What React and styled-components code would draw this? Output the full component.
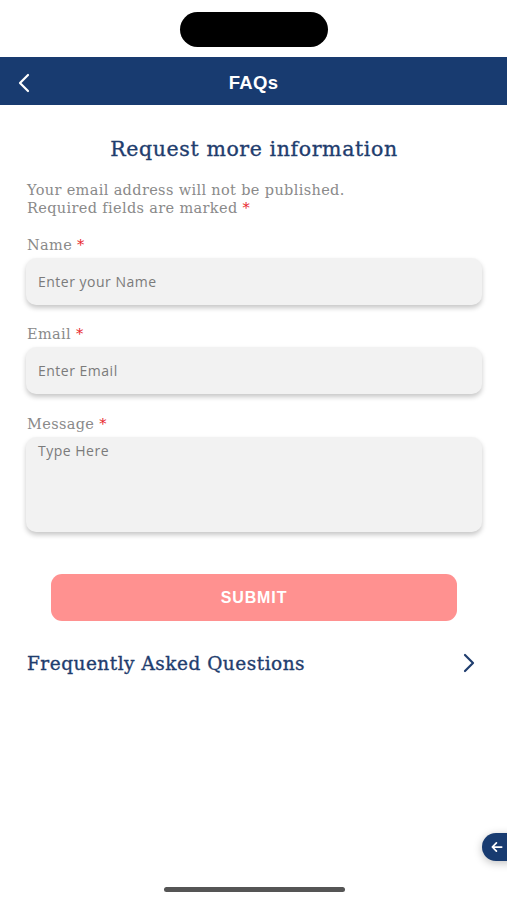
import React from 'react';
import styled, { createGlobalStyle } from 'styled-components';

const Global = createGlobalStyle`
  html, body { margin: 0; padding: 0; background: #fff; }
  #root { min-height: 900px; }
  * { box-sizing: border-box; }
`;

const slab = `"DejaVu Serif", "Liberation Serif", serif`;
const sans = `"Open Sans", Roboto, "Liberation Sans", Arial, sans-serif`;

const Screen = styled.div`
  position: relative;
  width: 507px;
  height: 900px;
  overflow: hidden;
  background: #fff;
  display: flex;
  flex-direction: column;
`;

const StatusBar = styled.div`
  height: 57px;
  display: flex;
  justify-content: center;
  padding-top: 12px;
`;

const Island = styled.div`
  width: 148px;
  height: 35px;
  border-radius: 18px;
  background: #000;
`;

const NavBar = styled.div`
  height: 48px;
  background: #183b70;
  display: flex;
  align-items: center;
  justify-content: center;
  padding-top: 3px;
  position: relative;
`;

const BackBtn = styled.button`
  position: absolute;
  left: 12px;
  top: 14px;
  width: 24px;
  height: 24px;
  padding: 0;
  border: 0;
  background: none;
  display: flex;
  align-items: center;
  justify-content: center;
`;

const NavTitle = styled.h1`
  margin: 0;
  color: #fff;
  font-family: "Liberation Sans", Arial, sans-serif;
  font-weight: bold;
  font-size: 18.5px;
  letter-spacing: 0.3px;
`;

const Content = styled.div`
  padding: 0 25px 0 26px;
  display: flex;
  flex-direction: column;
`;

const Heading = styled.h2`
  margin: 32px 0 0;
  text-align: center;
  font-family: ${slab};
  font-weight: normal;
  font-size: 20.5px;
  letter-spacing: 0.6px;
  color: #1f3d6e;
  -webkit-text-stroke: 0.35px #1f3d6e;
`;

const Note = styled.p`
  margin: 20px 0 0 1px;
  font-family: ${slab};
  font-size: 14.5px;
  letter-spacing: 0.35px;
  line-height: 18px;
  color: #8a8a8a;
`;

const Star = styled.span`
  color: #e8262b;
`;

const Field = styled.div`
  display: flex;
  flex-direction: column;
  margin-top: ${p => p.$top}px;
`;

const Label = styled.label`
  font-family: ${slab};
  font-size: 14.5px;
  letter-spacing: 0.35px;
  color: #8a8a8a;
  margin-left: 1px;
  line-height: 18px;
`;

const Input = styled.input`
  margin-top: 4px;
  height: 47px;
  width: 100%;
  border: 0;
  border-radius: 10px;
  background: #f2f2f2;
  box-shadow: 0 3px 5px rgba(0, 0, 0, 0.22);
  padding: 0 12px;
  font-family: ${sans};
  font-size: 14px;
  color: #333;
  outline: none;
  &::placeholder { color: #7b7b7b; letter-spacing: 0.5px; }
`;

const TextArea = styled.textarea`
  margin-top: 4px;
  height: 95px;
  width: 100%;
  border: 0;
  border-radius: 10px;
  background: #f2f2f2;
  box-shadow: 0 3px 5px rgba(0, 0, 0, 0.22);
  padding: 4px 12px;
  resize: none;
  font-family: ${sans};
  font-size: 14px;
  line-height: 20px;
  outline: none;
  &::placeholder { color: #7b7b7b; letter-spacing: 0.5px; }
`;

const Submit = styled.button`
  margin: 42px 25px 0;
  height: 47px;
  border: 0;
  border-radius: 11px;
  background: #ff9190;
  color: #fff;
  font-family: "Liberation Sans", Arial, sans-serif;
  font-weight: bold;
  font-size: 16px;
  letter-spacing: 0.9px;
`;

const FaqRow = styled.div`
  margin-top: 30px;
  display: flex;
  align-items: center;
  justify-content: space-between;
  padding-right: 1px;
`;

const FaqText = styled.span`
  font-family: ${slab};
  font-size: 18.5px;
  letter-spacing: 0.5px;
  color: #1f3d6e;
  -webkit-text-stroke: 0.35px #1f3d6e;
  margin-left: 1px;
`;

const FloatBtn = styled.button`
  position: absolute;
  left: 482px;
  top: 833px;
  width: 42px;
  height: 28px;
  border-radius: 14px;
  border: 0;
  padding: 0 0 0 8px;
  background: #183b70;
  box-shadow: 0 2px 8px rgba(0, 0, 0, 0.25);
  display: flex;
  align-items: center;
`;

const HomeBar = styled.div`
  position: absolute;
  left: 164px;
  top: 887px;
  width: 181px;
  height: 5px;
  border-radius: 3px;
  background: #555;
`;

const Chevron = ({ dir = 'left', color = '#fff', size = 22, stroke = 2.4 }) => (
  <svg width={size} height={size} viewBox="0 0 24 24" fill="none" stroke={color}
    strokeWidth={stroke} strokeLinecap="round" strokeLinejoin="round">
    {dir === 'left' ? <path d="M16 4 L8 12 L16 20" /> : <path d="M8 4 L16 12 L8 20" />}
  </svg>
);

export default function App() {
  return (
    <Screen>
      <Global />
      <StatusBar><Island /></StatusBar>
      <NavBar>
        <BackBtn><Chevron dir="left" size={24} stroke={2.2} /></BackBtn>
        <NavTitle>FAQs</NavTitle>
      </NavBar>
      <Content>
        <Heading>Request more information</Heading>
        <Note>
          Your email address will not be published.<br />
          Required fields are marked <Star>*</Star>
        </Note>
        <Field $top={19}>
          <Label>Name <Star>*</Star></Label>
          <Input placeholder="Enter your Name" />
        </Field>
        <Field $top={20}>
          <Label>Email <Star>*</Star></Label>
          <Input placeholder="Enter Email" />
        </Field>
        <Field $top={21}>
          <Label>Message <Star>*</Star></Label>
          <TextArea placeholder="Type Here" />
        </Field>
        <Submit>SUBMIT</Submit>
        <FaqRow>
          <FaqText>Frequently Asked Questions</FaqText>
          <Chevron dir="right" color="#1f3d6e" size={24} stroke={2.2} />
        </FaqRow>
      </Content>
      <FloatBtn>
        <svg width="14" height="14" viewBox="0 0 24 24" fill="none" stroke="#fff" strokeWidth="3" strokeLinecap="round" strokeLinejoin="round">
          <path d="M20 12H5M11 5l-7 7 7 7" />
        </svg>
      </FloatBtn>
      <HomeBar />
    </Screen>
  );
}
